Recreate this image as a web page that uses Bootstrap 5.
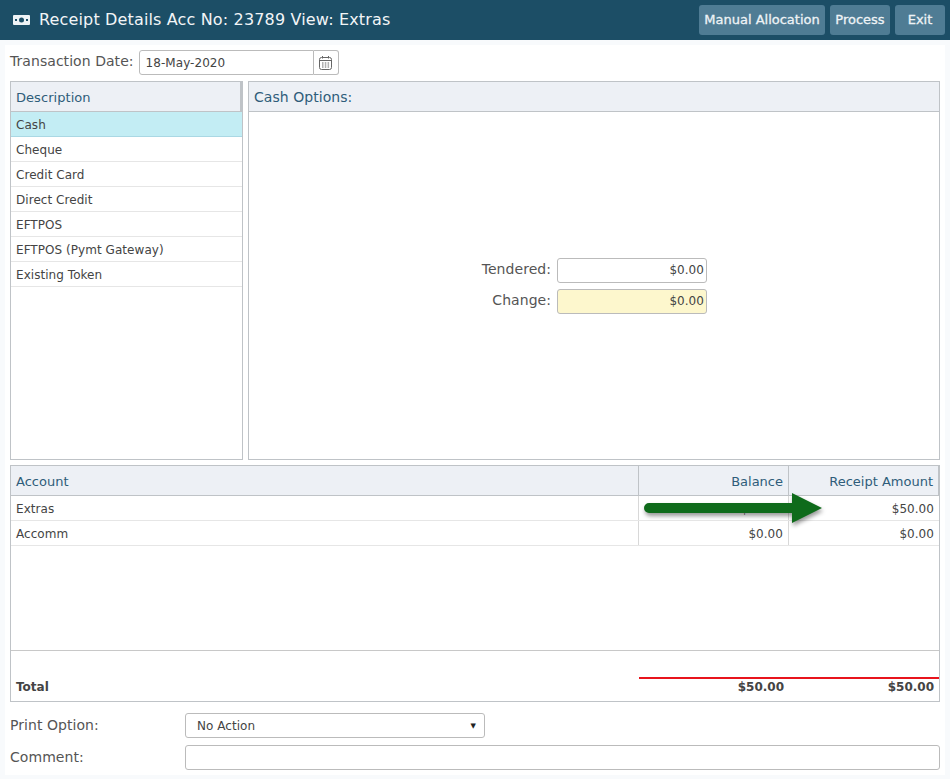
<!DOCTYPE html>
<html lang="en"><head><meta charset="utf-8"><title>Receipt Details</title>
<link href="https://cdn.jsdelivr.net/npm/bootstrap@5.3.0/dist/css/bootstrap.min.css" rel="stylesheet">
<style>
html,body{height:779px;overflow:hidden}
body{background:#f8fafc;font-family:"DejaVu Sans",sans-serif;font-size:12px;letter-spacing:.05px;color:#444;line-height:1.2}
.topbar{height:40px;background:#1c4e66;color:#fff;padding:0 5px 0 13px}
.topbar-title{font-size:16px;letter-spacing:.15px;color:#f2f5f7;gap:9px}
.topbtn{background:#4f7c94;color:#eef3f6;font-size:13px;letter-spacing:0;-webkit-text-stroke:.3px #eef3f6;border:0;border-radius:3px;height:30px;padding:0;display:flex;align-items:center;justify-content:center}
.btnrow{gap:5px}
.w-alloc{width:126px}.w-proc{width:60px}.w-exit{width:50px}
.sheet{background:#fff;margin:5px 5px 0;height:730px;padding:5px 5px 0}
.fieldlabel{font-size:14px;color:#555;margin-right:5px;padding-bottom:2px}
.datebox{width:175px;height:25px;border:1px solid #bbb;border-radius:3px 0 0 3px;background:#fff;font-size:12px;padding:2px 6px 0;color:#444;display:flex;align-items:center}
.datebtn{width:25px;height:25px;border:1px solid #bbb;border-left:0;border-radius:0 3px 3px 0;background:#fff;display:flex;align-items:center;justify-content:center}
.panes{margin-top:6px;gap:5px}
.pane{border:1px solid #bfc3c7;background:#fff}
.panehead{height:30px;background:#edf0f5;border-bottom:1px solid #bfc3c7;color:#2f5d7a;font-size:13px;padding:2px 5px 0;display:flex;align-items:center}
.panehead.wider{font-size:14px}
.leftpane{width:233px;height:379px}
.leftpane .panehead{border-right:2px solid #bfc3c7}
.rightpane{width:692px;height:379px}
.descrow{height:25px;border-bottom:1px solid #e6e6e6;padding:2px 5px 0;display:flex;align-items:center;color:#444}
.descrow.chosen{background:#c3edf4;border-bottom-color:#aad8e4}
.cashbody{height:347px;padding:146px 74px 0 0}
.cashgap{margin-bottom:6px}
.cashlabel{width:150px;text-align:right;font-size:14px;color:#555;padding:0 6px 2px 0}
.cashinput{width:150px;height:25px;border:1px solid #bbb;border-radius:3px;text-align:right;padding:0 2px;display:flex;align-items:center;justify-content:flex-end;color:#444}
.cashinput.owed{background:#fdf7cd}
.grid-pane{height:237px;display:flex;flex-direction:column;position:relative;margin-top:5px;width:930px}
.gridrow{display:flex}
.c-a{width:627px;padding:0 5px}.c-b{width:150px;padding:0 5px;text-align:right;border-left:1px solid #d8d8d8}.c-c{flex:1;padding:0 5px;text-align:right;border-left:1px solid #d8d8d8}
.gridhead{height:30px;background:#edf0f5;border-bottom:1px solid #bfc3c7;color:#2f5d7a;font-size:13px;letter-spacing:0;align-items:center;border-right:1px solid #bfc3c7}
.gridhead>div{height:100%;display:flex;align-items:center;padding-top:2px}
.gridhead .c-b,.gridhead .c-c{border-left-color:#bfc3c7;justify-content:flex-end}
.datarow{height:25px;border-bottom:1px solid #e6e6e6;align-items:center}
.datarow>div{height:100%;display:flex;align-items:center;padding-top:2px}
.datarow .c-b,.datarow .c-c{justify-content:flex-end}
.gridspace{flex:1;border-bottom:1px solid #c8c8c8}
.totalrow{height:50px;font-weight:700;letter-spacing:0;align-items:flex-end;padding-bottom:7px;position:relative}
.redrule{position:absolute;left:628px;right:0;top:26px;height:2px;background:#e8141c}
.totalrow .c-b{border-left:0;padding-right:4px}
.totalrow .c-c{border-left:0;padding-right:5px}
.flowarrow{position:absolute;left:632px;top:26px;filter:drop-shadow(1px 3px 2px rgba(0,0,0,.4))}
.printrow{margin-top:11px}
.commentrow{margin-top:7px}
.formlabel{width:175px;font-size:14px;color:#555}
.selectbox{width:300px;height:25px;border:1px solid #bbb;border-radius:3px;padding:2px 8px 0 11px;display:flex;align-items:center;justify-content:space-between}
.commentbox{width:755px;height:25px;border:1px solid #bbb;border-radius:3px;background:#fff}
.caretmark{font-size:7px;color:#222}
</style></head><body>
<div class="topbar d-flex align-items-center justify-content-between">
  <div class="topbar-title d-flex align-items-center">
    <svg width="17" height="10" viewBox="0 0 17 10"><rect width="17" height="10" rx="1" fill="#eef3f6"/><circle cx="8.5" cy="5" r="2.5" fill="#1c4e66"/><rect x="2" y="4" width="2" height="2" fill="#1c4e66"/><rect x="13" y="4" width="2" height="2" fill="#1c4e66"/></svg>
    <span>Receipt Details Acc No: 23789 View: Extras</span>
  </div>
  <div class="d-flex btnrow">
    <button class="topbtn w-alloc">Manual Allocation</button>
    <button class="topbtn w-proc">Process</button>
    <button class="topbtn w-exit">Exit</button>
  </div>
</div>
<div class="sheet">
  <div class="d-flex align-items-center">
    <span class="fieldlabel">Transaction Date:</span>
    <div class="datebox">18-May-2020</div>
    <div class="datebtn"><svg width="13" height="14" viewBox="0 0 13 14" fill="none" stroke="#666"><rect x=".5" y="1.5" width="12" height="12" rx="2"/><path d="M.5 4.5h12M3.5 0v2.5M9.5 0v2.5"/><path d="M3 7h1.5M5.8 7h1.5M8.6 7h1.5M3 9h1.5M5.8 9h1.5M8.6 9h1.5M3 11h1.5M5.8 11h1.5M8.6 11h1.5" stroke-width="1.2"/></svg></div>
  </div>
  <div class="d-flex panes">
    <div class="pane leftpane">
      <div class="panehead">Description</div>
      <div class="descrow chosen">Cash</div>
      <div class="descrow">Cheque</div>
      <div class="descrow">Credit Card</div>
      <div class="descrow">Direct Credit</div>
      <div class="descrow">EFTPOS</div>
      <div class="descrow">EFTPOS (Pymt Gateway)</div>
      <div class="descrow">Existing Token</div>
    </div>
    <div class="pane rightpane">
      <div class="panehead wider">Cash Options:</div>
      <div class="cashbody">
        <div class="d-flex align-items-center justify-content-center cashgap"><div class="cashlabel">Tendered:</div><div class="cashinput">$0.00</div></div>
        <div class="d-flex align-items-center justify-content-center"><div class="cashlabel">Change:</div><div class="cashinput owed">$0.00</div></div>
      </div>
    </div>
  </div>
  <div class="pane grid-pane">
    <div class="gridrow gridhead"><div class="c-a">Account</div><div class="c-b">Balance</div><div class="c-c">Receipt Amount</div></div>
    <div class="gridrow datarow"><div class="c-a">Extras</div><div class="c-b">$50.00</div><div class="c-c">$50.00</div></div>
    <div class="gridrow datarow"><div class="c-a">Accomm</div><div class="c-b">$0.00</div><div class="c-c">$0.00</div></div>
    <div class="gridspace"></div>
    <div class="gridrow totalrow"><div class="redrule"></div><div class="c-a">Total</div><div class="c-b">$50.00</div><div class="c-c">$50.00</div></div>
    <svg class="flowarrow" width="180" height="34" viewBox="0 0 180 34"><path d="M6 11H149V1l30 15-30 15V21H6a5 5 0 0 1 0-10z" fill="#0f6b1b"/></svg>
  </div>
  <div class="d-flex align-items-center printrow">
    <div class="formlabel">Print Option:</div>
    <div class="selectbox"><span>No Action</span><span class="caretmark">▼</span></div>
  </div>
  <div class="d-flex align-items-center commentrow">
    <div class="formlabel">Comment:</div>
    <div class="commentbox"></div>
  </div>
</div>
</body></html>
